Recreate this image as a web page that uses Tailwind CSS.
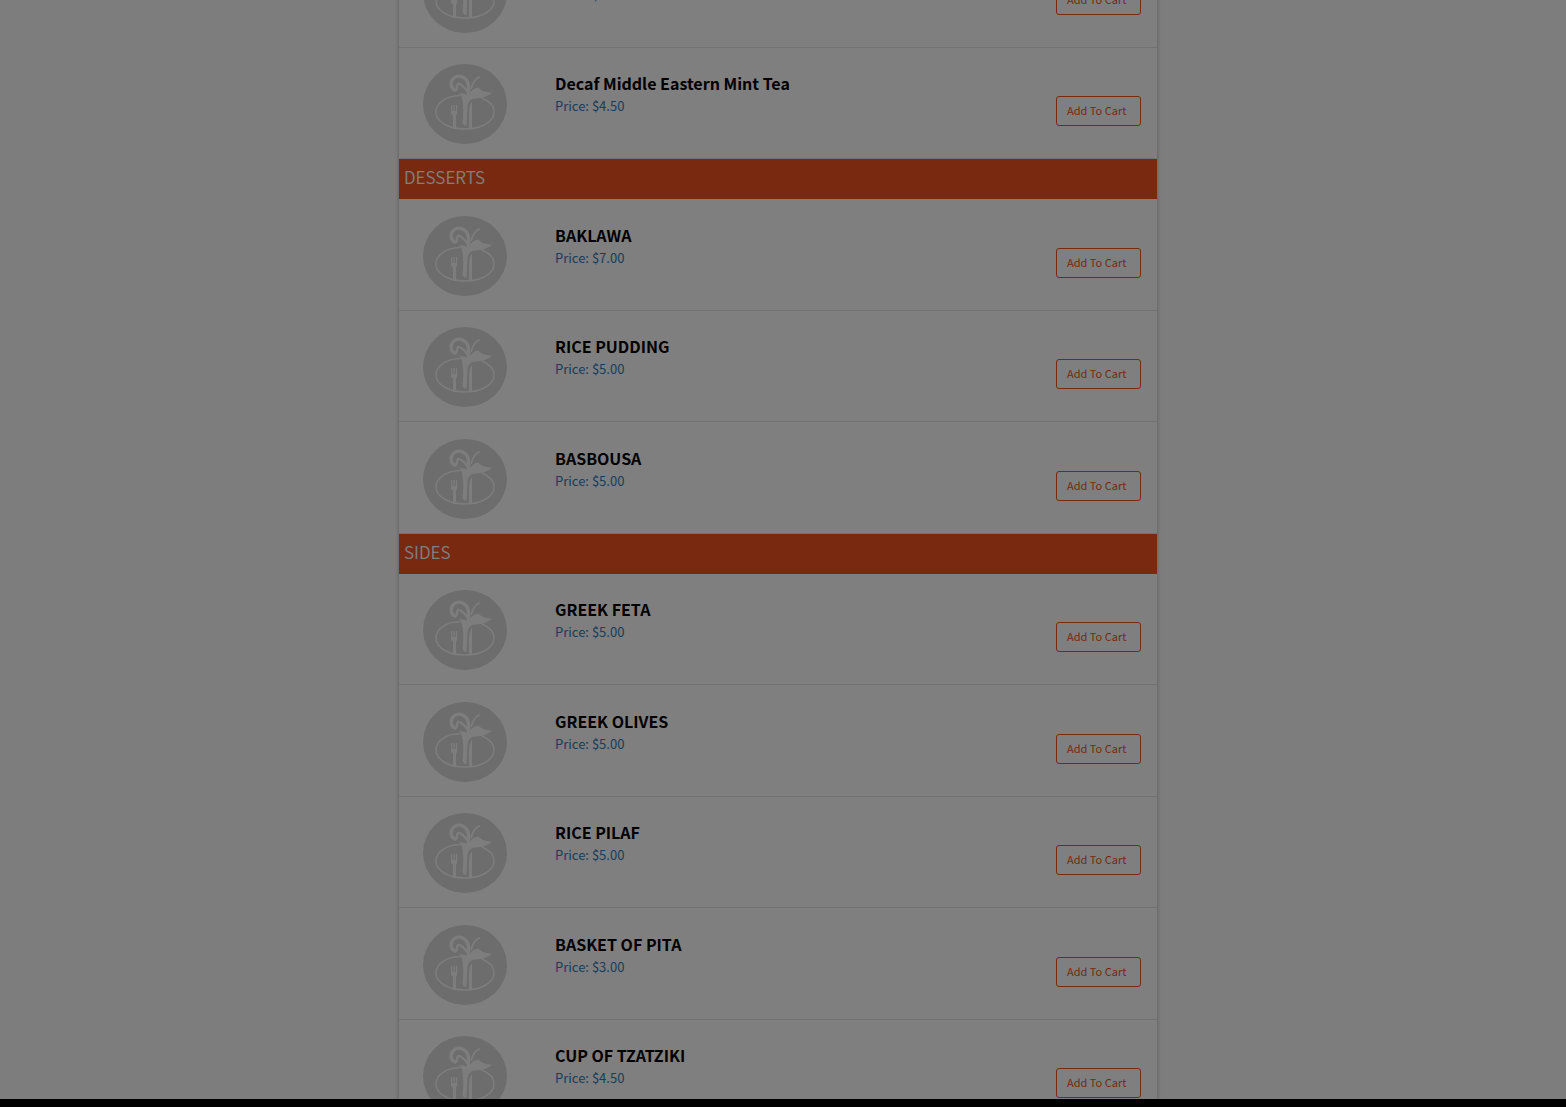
<!DOCTYPE html>
<html lang="en">
<head>
    <meta charset="UTF-8">
    <meta name="viewport" content="width=device-width, initial-scale=1.0">
    <title>Menu</title>
    <script src="https://cdn.jsdelivr.net/npm/@tailwindcss/browser@4"></script>
</head>
<body class="h-screen overflow-hidden bg-[#fbfbfb] pr-[10px] font-['Noto_Sans_CJK_SC','Open_Sans',sans-serif]">
    <!-- Placeholder picture for dishes -->
    <svg class="hidden">
        <symbol id="dish" viewBox="0 0 84 80">
            <ellipse cx="42" cy="40" rx="42" ry="40" fill="#dadada"/>
            <g fill="none" stroke="#fafafa" stroke-linecap="round" stroke-linejoin="round">
                <path stroke-width="1.500" d="M37 31.600C23 32 13 39 13 48c0 10 13 17 29 17s29-7 29-17c0-6-5-11-12-14"/>
                <path stroke-width="3.400" d="M32 26c-5-2-5-9-1-12 5-4 12-1 14 5 1 4 1 8 0 13"/>
                <path stroke-width="2.400" d="M32 26c3 0 1-4 3-6 3-1 7 4 10 8"/>
                <path stroke-width="1.800" d="M48.500 24c1-5 4-9 7.500-11"/>
            </g>
            <g fill="#fafafa">
                <path d="M36 29c4 0 7 1 9 3 2-3 5-8 10-8.500 3 3 8 5 14 5-5 5-12 6-18 6-4 1-6 4-6.500 8-.5 6-.5 13-1 19-2 1-4-1-4-4 1-8 1-13 0-20-.5-4-1-7-3.500-8.500z"/>
                <path d="M28 41h1.200v6h1.200v-6h1.400v6H33v-6h1.200v8c0 1-.7 2-1.200 2.500V65h-3V51.500c-1-.5-2-1.500-2-2.500z"/>
                <path d="M46 65V48c0-4 1-8 3-10v27z"/>
            </g>
        </symbol>
    </svg>

    <main class="mx-auto -mt-[63px] w-[758px] bg-white shadow-[0_0_4px_rgba(0,0,0,0.3)]">
        <section>
            <ul id="drinks"></ul>
        </section>
        <section>
            <h2 class="h-10 bg-[#f0521e] px-[5px] text-[17px] leading-[35px] font-[350] text-white">DESSERTS</h2>
            <ul id="desserts"></ul>
        </section>
        <section>
            <h2 class="h-10 bg-[#f0521e] px-[5px] text-[17px] leading-[35px] font-[350] text-white">SIDES</h2>
            <ul id="sides"></ul>
        </section>
    </main>

    <!-- Backdrop and bottom bar -->
    <div class="fixed inset-0 bg-black/50"></div>
    <footer class="fixed inset-x-0 bottom-0 h-2 bg-black"></footer>

    <script>
        const tall = 'flex h-[112px] items-start border-b border-[#e4e4e4] pt-[17px] pr-4 pl-6';
        const short = 'flex h-[111px] items-start border-b border-[#e4e4e4] pt-4 pr-4 pl-6';

        function render(id, tallRows, items) {
            document.getElementById(id).innerHTML = items.map(([name, price], i) => `
                <li class="${i % 2 === tallRows ? tall : short}">
                    <svg class="h-20 w-[84px] shrink-0"><use href="#dish"/></svg>
                    <div class="ml-12 grow pt-2">
                        <h3 class="text-[16px] leading-[22px] font-bold text-black">${name}</h3>
                        <p class="text-[13px] leading-6 text-[#337ab7]">Price: $${price}</p>
                    </div>
                    <button type="button" class="mt-8 h-[30px] w-[85px] rounded-[3px] border border-[#f0521e] pb-[2px] pl-[10px] text-left text-[11px] text-[#f0521e]">Add To Cart</button>
                </li>`).join('');
        }

        render('drinks', 2, [
            ['Middle Eastern Mint Tea', '4.50'],
            ['Decaf Middle Eastern Mint Tea', '4.50']
        ]);
        render('desserts', 0, [
            ['BAKLAWA', '7.00'],
            ['RICE PUDDING', '5.00'],
            ['BASBOUSA', '5.00']
        ]);
        render('sides', 1, [
            ['GREEK FETA', '5.00'],
            ['GREEK OLIVES', '5.00'],
            ['RICE PILAF', '5.00'],
            ['BASKET OF PITA', '3.00'],
            ['CUP OF TZATZIKI', '4.50']
        ]);
    </script>
</body>
</html>
